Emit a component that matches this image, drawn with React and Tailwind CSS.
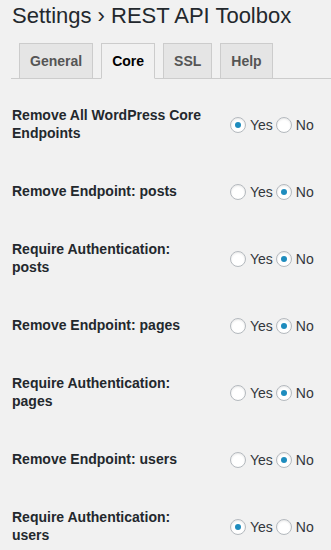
import React from 'react'

const tabs = [
  { name: 'General' },
  { name: 'Core', active: true },
  { name: 'SSL' },
  { name: 'Help' },
]

const rows = [
  { label: 'Remove All WordPress Core Endpoints', value: 'yes' },
  { label: 'Remove Endpoint: posts', value: 'no' },
  { label: 'Require Authentication: posts', value: 'no' },
  { label: 'Remove Endpoint: pages', value: 'no' },
  { label: 'Require Authentication: pages', value: 'no' },
  { label: 'Remove Endpoint: users', value: 'no' },
  { label: 'Require Authentication: users', value: 'yes' },
]

function Radio({ checked, text }) {
  return (
    <label className="inline-flex items-center">
      <span className="w-4 h-4 rounded-full border border-[#b4b9be] bg-white shadow-[inset_0_1px_2px_rgba(0,0,0,0.1)] flex items-center justify-center mr-[4px]">
        {checked && <span className="w-[6px] h-[6px] rounded-full bg-[#1e8cbe]" />}
      </span>
      <span className="text-[14px] leading-[18px] text-[#32373c]">{text}</span>
    </label>
  )
}

export default function App() {
  return (
    <div className="min-h-screen bg-[#f1f1f1] text-[#23282d] font-['Liberation_Sans',Arial,sans-serif] pl-[11px] overflow-hidden">
      <h1 className="text-[22px] leading-[29px] font-normal pt-[1px] pl-[1px]">
        Settings › REST API Toolbox
      </h1>

      <nav className="mt-[13px] flex border-b border-[#ccc]">
        {tabs.map(t => (
          <span
            key={t.name}
            className={
              'ml-2 -mb-px px-[10px] py-[5px] text-[14px] leading-[24px] font-bold border ' +
              (t.active
                ? 'bg-[#f1f1f1] text-black border-[#ccc] border-b-[#f1f1f1]'
                : 'bg-[#e5e5e5] text-[#555] border-[#ccc]')
            }
          >
            {t.name}
          </span>
        ))}
      </nav>

      <div className="mt-[7px] pl-[1px]">
        {rows.map(r => (
          <div key={r.label} className="flex items-center py-[20px]">
            <div className="w-[218px] pr-[23px] shrink-0 text-[14px] leading-[18px] font-bold">
              {r.label}
            </div>
            <div className="flex items-center gap-[3px] h-[18px] translate-y-[1px]">
              <Radio checked={r.value === 'yes'} text="Yes" />
              <Radio checked={r.value === 'no'} text="No" />
            </div>
          </div>
        ))}
      </div>
    </div>
  )
}
